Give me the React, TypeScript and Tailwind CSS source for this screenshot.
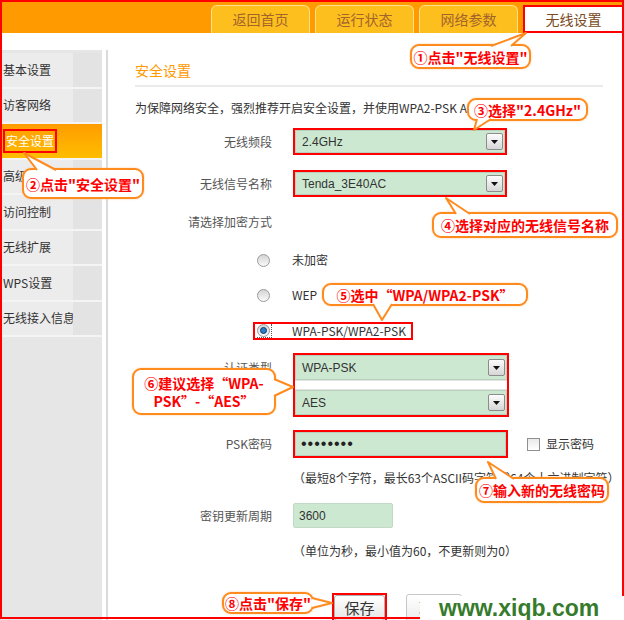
import type { ReactNode } from 'react'

const tabs = ['返回首页', '运行状态', '网络参数']
const menu = ['基本设置', '访客网络', '安全设置', '高级设置', '访问控制', '无线扩展', 'WPS设置', '无线接入信息']

type Pt = [number, number]

// tails of the callouts: base on the inner edge of the bubble border, tip in the middle
const tails: Pt[][] = [
  [[491, 46], [526, 33], [511, 46]],
  [[37, 170], [24, 153], [56, 170]],
  [[477, 119], [474, 130], [491, 119]],
  [[456, 214], [446, 198], [470, 214]],
  [[373, 304], [382, 320], [392, 304]],
  [[274, 379], [293, 387], [274, 396]],
  [[496, 479], [488, 462], [514, 479]],
  [[312, 598], [332, 603], [312, 608]],
]

function Arrow() {
  return (
    <span className="flex h-[17px] w-[17px] items-center justify-center rounded-[2px] border border-[#8c8c8c] bg-linear-to-b from-[#fdfdfd] to-[#d6d6d6]">
      <svg width="7" height="4" viewBox="0 0 7 4">
        <path d="M0 0h7L3.5 4z" fill="#111" />
      </svg>
    </span>
  )
}

function Select({ value, tall }: { value: string; tall?: boolean }) {
  return (
    <div
      className={`flex items-center justify-between border border-[#b9d0bd] bg-[#cde8d1] pl-[6px] pr-[1px] font-['Liberation_Sans','Noto_Sans_CJK_SC',sans-serif] text-[12px] text-[#333] ${
        tall ? 'h-[25px]' : 'h-[23px]'
      }`}
    >
      {value}
      <Arrow />
    </div>
  )
}

function Radio({ on }: { on?: boolean }) {
  return (
    <span className="flex h-[13px] w-[13px] shrink-0 items-center justify-center rounded-full border border-[#9a9a9a] bg-linear-to-b from-[#d4d4d4] to-[#fafafa]">
      {on && <span className="h-[7px] w-[7px] rounded-full border border-[#0e3d6b] bg-[#2d7cc4]" />}
    </span>
  )
}

function Row({ label, className, children }: { label: string; className: string; children: ReactNode }) {
  return (
    <div className={`flex items-center ${className}`}>
      <div className="w-[137px] shrink-0 text-right text-[#555]">{label}</div>
      <div className="ml-[21px] flex items-center">{children}</div>
    </div>
  )
}

function Callout({ className, children }: { className: string; children: ReactNode }) {
  return (
    <div
      className={`absolute flex items-center justify-center rounded-[9px] border-2 border-[#ff8a1e] bg-white text-center text-[14px] font-bold leading-[18px] text-[#ff0000] shadow-[0_0_2px_#ffc890] ${className}`}
    >
      {children}
    </div>
  )
}

export default function App() {
  return (
    <div className="relative h-[620px] w-[624px] overflow-hidden bg-white font-['Noto_Sans_CJK_SC',sans-serif] text-[12px] text-[#333]">
      {/* top bar */}
      <header className="flex h-[33px] items-end gap-[5px] bg-[#ff9a00] pl-[211px]">
        {tabs.map((t) => (
          <div
            key={t}
            className="flex h-[28px] w-[99px] items-center justify-center rounded-t-[6px] border border-b-0 border-[#ffdf8a] bg-[#fdbf1e] text-[14px] text-[#a3642c]"
          >
            {t}
          </div>
        ))}
        <div className="flex h-[28px] flex-1 items-center justify-center border-2 border-[#ff0000] bg-white text-[14px] text-[#7a4a22]">
          无线设置
        </div>
      </header>

      <div className="flex h-[587px]">
        {/* side menu */}
        <nav className="mt-[17px] w-[102px] bg-[#e6e6e6] pt-[3px]">
          {menu.map((m) =>
            m === '安全设置' ? (
              <div
                key={m}
                className="flex h-[35.5px] items-center border-b-2 border-[#f4f4f4] bg-linear-to-b from-[#ff9c00] to-[#ffbd00] pl-[3px] text-white"
              >
                <span className="border-2 border-[#ff0000] px-[1px] py-[1px] text-[12px]">{m}</span>
              </div>
            ) : (
              <div key={m} className="flex h-[35.5px] border-b-2 border-[#f4f4f4]">
                <div className="flex w-[73px] items-center bg-[#ececec] pl-[3px] whitespace-nowrap">{m}</div>
                <div className="flex-1 bg-[#e3e3e3]" />
              </div>
            ),
          )}
        </nav>
        <div className="ml-[4px] mt-[17px] w-[2px] bg-[#dadada]" />

        {/* content */}
        <main className="flex-1 pl-[27px] pt-[27px]">
          <h2 className="h-[20px] text-[14px] leading-[20px] text-[#ff9900]">安全设置</h2>
          <div className="mt-[5px] h-[2px] w-[468px] bg-[#ebebeb]" />
          <p className="mt-[13px] whitespace-nowrap leading-[16px]">
            为保障网络安全，强烈推荐开启安全设置，并使用WPA2-PSK AES加密方式。
          </p>

          <Row label="无线频段" className="mt-[12px]">
            <div className="w-[214px] border-2 border-[#ff0000]">
              <Select value="2.4GHz" />
            </div>
          </Row>
          <Row label="无线信号名称" className="mt-[15px]">
            <div className="w-[214px] border-2 border-[#ff0000]">
              <Select value="Tenda_3E40AC" />
            </div>
          </Row>
          <Row label="请选择加密方式" className="mt-[17px] h-[16px]">
            {null}
          </Row>

          <div className="ml-[122px] mt-[20px] flex h-[20px] items-center">
            <Radio />
            <span className="ml-[22px]">未加密</span>
          </div>
          <div className="ml-[122px] mt-[15px] flex h-[20px] items-center">
            <Radio />
            <span className="ml-[22px]">WEP</span>
          </div>
          <div className="ml-[118px] mt-[17px] flex h-[18px] w-[160px] items-center border-2 border-[#ff0000] pl-[2px]">
            <span className="flex h-[14px] items-center border-r border-b border-dotted border-[#555] pr-[1px]">
              <Radio on />
            </span>
            <span className="ml-[20px] leading-[14px]">WPA-PSK/WPA2-PSK</span>
          </div>

          <div className="mt-[13px] flex">
            <div className="w-[137px] shrink-0 text-right leading-[16px] text-[#555]">
              <div className="mt-[7px]">认证类型</div>
              <div className="mt-[21px]">加密规则</div>
            </div>
            <div className="ml-[21px] w-[216px] border-2 border-[#ff0000]">
              <Select value="WPA-PSK" tall />
              <div className="h-[10px] border-y border-[#e4e4e4] bg-white" />
              <Select value="AES" tall />
            </div>
          </div>

          <Row label="PSK密码" className="mt-[13px]">
            <div className="w-[215px] border-2 border-[#ff0000]">
              <div className="flex h-[24px] items-center border border-[#b9d0bd] bg-[#cde8d1] pl-[5px] font-['Liberation_Sans',sans-serif] text-[16px] tracking-[1px] text-[#222]">
                ••••••••
              </div>
            </div>
            <span className="ml-[19px] h-[13px] w-[13px] border border-[#8f8f8f] bg-linear-to-b from-[#e9e9e9] to-white" />
            <span className="ml-[6px]">显示密码</span>
          </Row>
          <p className="ml-[158px] mt-[12px] whitespace-nowrap leading-[16px]">
            （最短8个字符，最长63个ASCII码字符或64个十六进制字符）
          </p>

          <Row label="密钥更新周期" className="mt-[17px]">
            <div className="flex h-[25px] w-[100px] items-center rounded-[2px] border border-[#c3d9c7] bg-[#cde8d1] pl-[5px] font-['Liberation_Sans',sans-serif] text-[12px]">
              3600
            </div>
          </Row>
          <p className="ml-[158px] mt-[15px] whitespace-nowrap leading-[16px]">（单位为秒，最小值为60，不更新则为0）</p>

          <div className="ml-[197px] mt-[34px] flex items-start">
            <div className="border-2 border-[#ff0000]">
              <div className="flex h-[26px] w-[51px] items-center justify-center rounded-[3px] border border-[#b0b0b0] bg-linear-to-b from-white to-[#e6e6e6] text-[15px]">
                保存
              </div>
            </div>
            <div className="ml-[19px] mt-[1px] flex h-[28px] w-[56px] items-center justify-center rounded-[3px] border border-[#c6c6c6] bg-linear-to-b from-white to-[#ececec] text-[15px]">
              取消
            </div>
          </div>
        </main>
      </div>

      {/* outer red frame */}
      <div className="pointer-events-none absolute left-0 top-0 h-[619px] w-[624px] border-2 border-[#ff0000]" />

      {/* annotations */}
      <Callout className="left-[410px] top-[44px] h-[25px] w-[121px]">①点击"无线设置"</Callout>
      <Callout className="left-[22px] top-[168px] h-[31px] w-[122px]">②点击"安全设置"</Callout>
      <Callout className="left-[467px] top-[98px] h-[23px] w-[121px]">③选择"2.4GHz"</Callout>
      <Callout className="left-[432px] top-[212px] h-[26px] w-[186px]">④选择对应的无线信号名称</Callout>
      <Callout className="left-[322px] top-[283px] h-[23px] w-[206px]">⑤选中“WPA/WPA2-PSK”</Callout>
      <Callout className="left-[132px] top-[368px] h-[47px] w-[144px]">
        ⑥建议选择“WPA-
        <br />
        PSK”-“AES”
      </Callout>
      <Callout className="left-[475px] top-[477px] h-[26px] w-[134px]">⑦输入新的无线密码</Callout>
      <Callout className="left-[222px] top-[592px] h-[22px] w-[92px]">⑧点击"保存"</Callout>

      <svg className="pointer-events-none absolute left-0 top-0" width={624} height={620}>
        {tails.map((t, i) => {
          const pts = t.map((p) => p.join(',')).join(' ')
          return (
            <g key={i}>
              <polygon points={pts} fill="#fff" />
              <polyline points={pts} fill="none" stroke="#ff8a1e" strokeWidth={2} strokeLinejoin="round" />
            </g>
          )
        })}
      </svg>

      {/* site watermark */}
      <div className="absolute left-[420px] top-[596px] flex h-[24px] w-[204px] items-center bg-white pl-[19px] font-['Liberation_Sans',sans-serif] text-[23px] font-bold leading-[24px] text-[#367b2c]">
        www.xiqb.com
      </div>
    </div>
  )
}
